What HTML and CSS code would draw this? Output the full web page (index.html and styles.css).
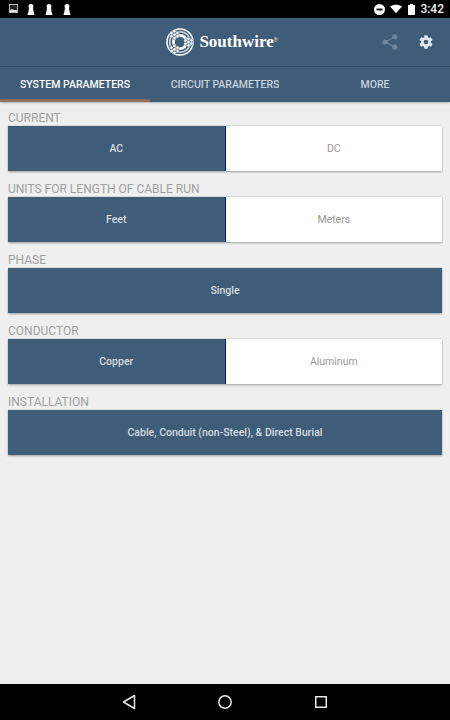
FILE: index.html
```html
<!DOCTYPE html>
<html lang="en">
<head>
<meta charset="utf-8">
<title>Southwire</title>
<link rel="stylesheet" href="styles.css">
</head>
<body>
<div class="screen">
  <div class="status">
    <div class="status-left">
      <svg class="pic" width="10" height="10" viewBox="0 0 10 10"><rect x="0.5" y="0.5" width="8" height="8" fill="#222" stroke="#bbb"/><path d="M1 8V6l2-1 2 1h3v2z" fill="#ddd"/></svg>
      <svg class="pawn" width="8" height="11" viewBox="0 0 8 11"><path d="M4 0a2.400 2.400 0 0 1 2 3.800l.6 4L7.600 11H.4l1-3.200.6-4A2.400 2.400 0 0 1 4 0z" fill="#fff"/></svg>
      <svg class="pawn" width="8" height="11" viewBox="0 0 8 11"><path d="M4 0a2.400 2.400 0 0 1 2 3.800l.6 4L7.600 11H.4l1-3.200.6-4A2.400 2.400 0 0 1 4 0z" fill="#fff"/></svg>
      <svg class="pawn" width="8" height="11" viewBox="0 0 8 11"><path d="M4 0a2.400 2.400 0 0 1 2 3.800l.6 4L7.600 11H.4l1-3.200.6-4A2.400 2.400 0 0 1 4 0z" fill="#fff"/></svg>
    </div>
    <div class="status-right">
      <svg width="11" height="11" viewBox="0 0 11 11"><circle cx="5.500" cy="5.500" r="5.500" fill="#fff"/><rect x="2.500" y="4.600" width="6" height="1.800" fill="#000"/></svg>
      <svg class="wifi" width="12" height="10" viewBox="0 0 14 10"><path d="M0 2.200C4-.7 10-.7 14 2.200L7 10z" fill="#fff"/></svg>
      <svg width="7" height="11" viewBox="0 0 7 11"><path d="M2 0h3v1h2v10H0V1h2z" fill="#fff"/></svg>
      <span class="clock">3:42</span>
    </div>
  </div>

  <header class="appbar">
    <div class="logo">
      <svg width="28" height="28" viewBox="0 0 28 28">
        <circle cx="14" cy="14" r="13" fill="none" stroke="#fff" stroke-width="1.600"/>
        <circle cx="14" cy="14" r="10.300" fill="none" stroke="#c9d3dc" stroke-width="1.600"/>
        <circle cx="14" cy="14" r="6.600" fill="none" stroke="#fff" stroke-width="2.800"/>
        <g fill="#fff" stroke="#3f5c78" stroke-width="0.500">
          <circle cx="8.500" cy="3.300" r="1.700"/><circle cx="11.500" cy="5" r="1.700"/><circle cx="11.500" cy="8.200" r="1.700"/><circle cx="8.500" cy="10" r="1.700"/><circle cx="5.500" cy="8.200" r="1.700"/><circle cx="5.500" cy="5" r="1.700"/><circle cx="8.500" cy="6.600" r="1.700"/>
          <circle cx="22.500" cy="10.800" r="1.700"/><circle cx="25.500" cy="12.400" r="1.700"/><circle cx="25.500" cy="15.600" r="1.700"/><circle cx="22.500" cy="17.300" r="1.700"/><circle cx="19.500" cy="15.600" r="1.700"/><circle cx="19.500" cy="12.400" r="1.700"/><circle cx="22.500" cy="14" r="1.700"/>
          <circle cx="8.500" cy="18" r="1.700"/><circle cx="11.500" cy="19.800" r="1.700"/><circle cx="11.500" cy="23" r="1.700"/><circle cx="8.500" cy="24.700" r="1.700"/><circle cx="5.500" cy="23" r="1.700"/><circle cx="5.500" cy="19.800" r="1.700"/><circle cx="8.500" cy="21.400" r="1.700"/>
        </g>
      </svg>
      <span class="wordmark">Southwire</span><span class="reg">®</span>
    </div>
    <div class="actions">
      <svg class="share" width="16" height="16" viewBox="0 0 16 16">
        <path d="M12.500 3 3.500 8l9 5" fill="none" stroke="#6d859c" stroke-width="1.300"/>
        <circle cx="12.800" cy="2.800" r="2.600" fill="#6d859c"/>
        <circle cx="3" cy="8" r="2.600" fill="#6d859c"/>
        <circle cx="12.800" cy="13.200" r="2.600" fill="#6d859c"/>
      </svg>
      <svg class="gear" width="16" height="16" viewBox="0 0 24 24">
        <path fill-rule="evenodd" fill="#dfe6ec" d="M19.400 13c.04-.33.06-.66.06-1s-.02-.67-.06-1l2.100-1.650c.19-.15.24-.42.12-.64l-2-3.460c-.12-.22-.39-.3-.61-.22l-2.490 1c-.52-.4-1.080-.73-1.690-.98l-.38-2.650A.49.49 0 0 0 14 2h-4c-.25 0-.46.18-.49.42l-.38 2.650c-.61.25-1.170.59-1.690.98l-2.490-1c-.23-.09-.49 0-.61.22l-2 3.460c-.13.22-.07.49.12.64L4.570 11c-.04.330-.07.670-.07 1s.03.670.07 1l-2.110 1.650c-.19.150-.24.420-.12.640l2 3.460c.12.220.39.300.61.220l2.490-1c.52.400 1.080.730 1.690.980l.38 2.650c.03.240.24.420.49.420h4c.25 0 .46-.18.49-.42l.38-2.650c.61-.25 1.170-.59 1.690-.98l2.490 1c.23.090.49 0 .61-.22l2-3.460c.12-.22.07-.49-.12-.64L19.400 13zM12 15.500a3.500 3.500 0 1 1 0-7 3.500 3.500 0 0 1 0 7z"/>
      </svg>
    </div>
  </header>

  <nav class="tabs">
    <div class="tab active">SYSTEM PARAMETERS</div>
    <div class="tab">CIRCUIT PARAMETERS</div>
    <div class="tab">MORE</div>
  </nav>

  <main class="content">
    <section class="group">
      <div class="label">CURRENT</div>
      <div class="seg">
        <div class="opt on split">AC</div>
        <div class="opt">DC</div>
      </div>
    </section>
    <section class="group">
      <div class="label">UNITS FOR LENGTH OF CABLE RUN</div>
      <div class="seg">
        <div class="opt on split">Feet</div>
        <div class="opt">Meters</div>
      </div>
    </section>
    <section class="group">
      <div class="label">PHASE</div>
      <div class="seg"><div class="opt on">Single</div></div>
    </section>
    <section class="group">
      <div class="label">CONDUCTOR</div>
      <div class="seg">
        <div class="opt on split">Copper</div>
        <div class="opt">Aluminum</div>
      </div>
    </section>
    <section class="group">
      <div class="label">INSTALLATION</div>
      <div class="seg"><div class="opt on">Cable, Conduit (non-Steel), &amp; Direct Burial</div></div>
    </section>
  </main>

  <footer class="navbar">
    <svg width="14" height="16" viewBox="0 0 14 16"><path d="M12.500 1.500v13L1.500 8z" fill="none" stroke="#e8e8e8" stroke-width="1.500" stroke-linejoin="round"/></svg>
    <svg width="14" height="14" viewBox="0 0 14 14"><circle cx="7" cy="7" r="6.200" fill="none" stroke="#e8e8e8" stroke-width="1.500"/></svg>
    <svg class="nav-square" width="12" height="12" viewBox="0 0 12 12"><rect x="0.750" y="0.750" width="10.500" height="10.500" fill="none" stroke="#e8e8e8" stroke-width="1.500"/></svg>
  </footer>
</div>
</body>
</html>
```
FILE: styles.css
```css
* { box-sizing: border-box; }
html, body { margin: 0; padding: 0; }
body { font-family: Roboto, "Liberation Sans", sans-serif; background: #efefef; }
.screen { width: 450px; height: 720px; display: flex; flex-direction: column; overflow: hidden; }

.status { height: 18px; background: #000; display: flex; justify-content: space-between; align-items: center; padding: 0 6px 0 9px; flex: none; }
.status-left { display: flex; align-items: center; }
.status-left svg { display: block; }
.pic { margin-right: 8px; }
.pawn { margin-right: 10px; }
.status-right { display: flex; align-items: center; gap: 5px; }
.wifi { margin-right: 1px; }
.clock { color: #f2f2f2; font-size: 12px; font-weight: 500; }

.appbar { height: 49px; background: #3f5c78; border-bottom: 1px solid #34506a; position: relative; display: flex; align-items: center; justify-content: center; flex: none; }
.logo { display: flex; align-items: center; margin-left: -6px; }
.logo svg { display: block; margin-right: 5px; }
.wordmark { font-family: "Liberation Serif", serif; font-weight: 700; font-size: 17px; color: #fff; }
.reg { font-size: 5px; color: #dfe6ec; align-self: flex-start; margin-top: 9px; }
.actions { position: absolute; right: 16px; top: 16px; display: flex; align-items: center; gap: 20px; }
.actions svg { display: block; }

.tabs { height: 35px; background: #3f5c78; display: flex; flex: none; box-shadow: 0 1px 2px rgba(0,0,0,.25); position: relative; }
.tab { width: 150px; display: flex; align-items: center; justify-content: center; font-size: 10.500px; font-weight: 500; color: #c8d2dc; padding-bottom: 1px; }
.tab.active { color: #fff; border-bottom: 3px solid #8f6e5c; padding-top: 2px; padding-bottom: 0; }

.content { flex: 1; padding: 9px 8px 0 8px; display: flex; flex-direction: column; }
.group { height: 71px; flex: none; }
.label { height: 15px; line-height: 14px; font-size: 12px; color: #a0a0a0; }
.seg { height: 45px; display: flex; background: #fff; box-shadow: 0 1px 2px rgba(0,0,0,.35), 0 -1px 0 rgba(0,0,0,.06); }
.opt { flex: 1; display: flex; align-items: center; justify-content: center; font-size: 10.500px; color: #999; }
.opt.on { background: #3f5c78; color: #d5dbe1; font-weight: 500; }
.opt.split { border-right: 1px solid #001a80; }

.navbar { height: 36px; background: #000; flex: none; display: flex; align-items: center; padding-left: 122px; gap: 82px; }
.navbar svg { display: block; }
.nav-square { margin-left: 1px; }
```
